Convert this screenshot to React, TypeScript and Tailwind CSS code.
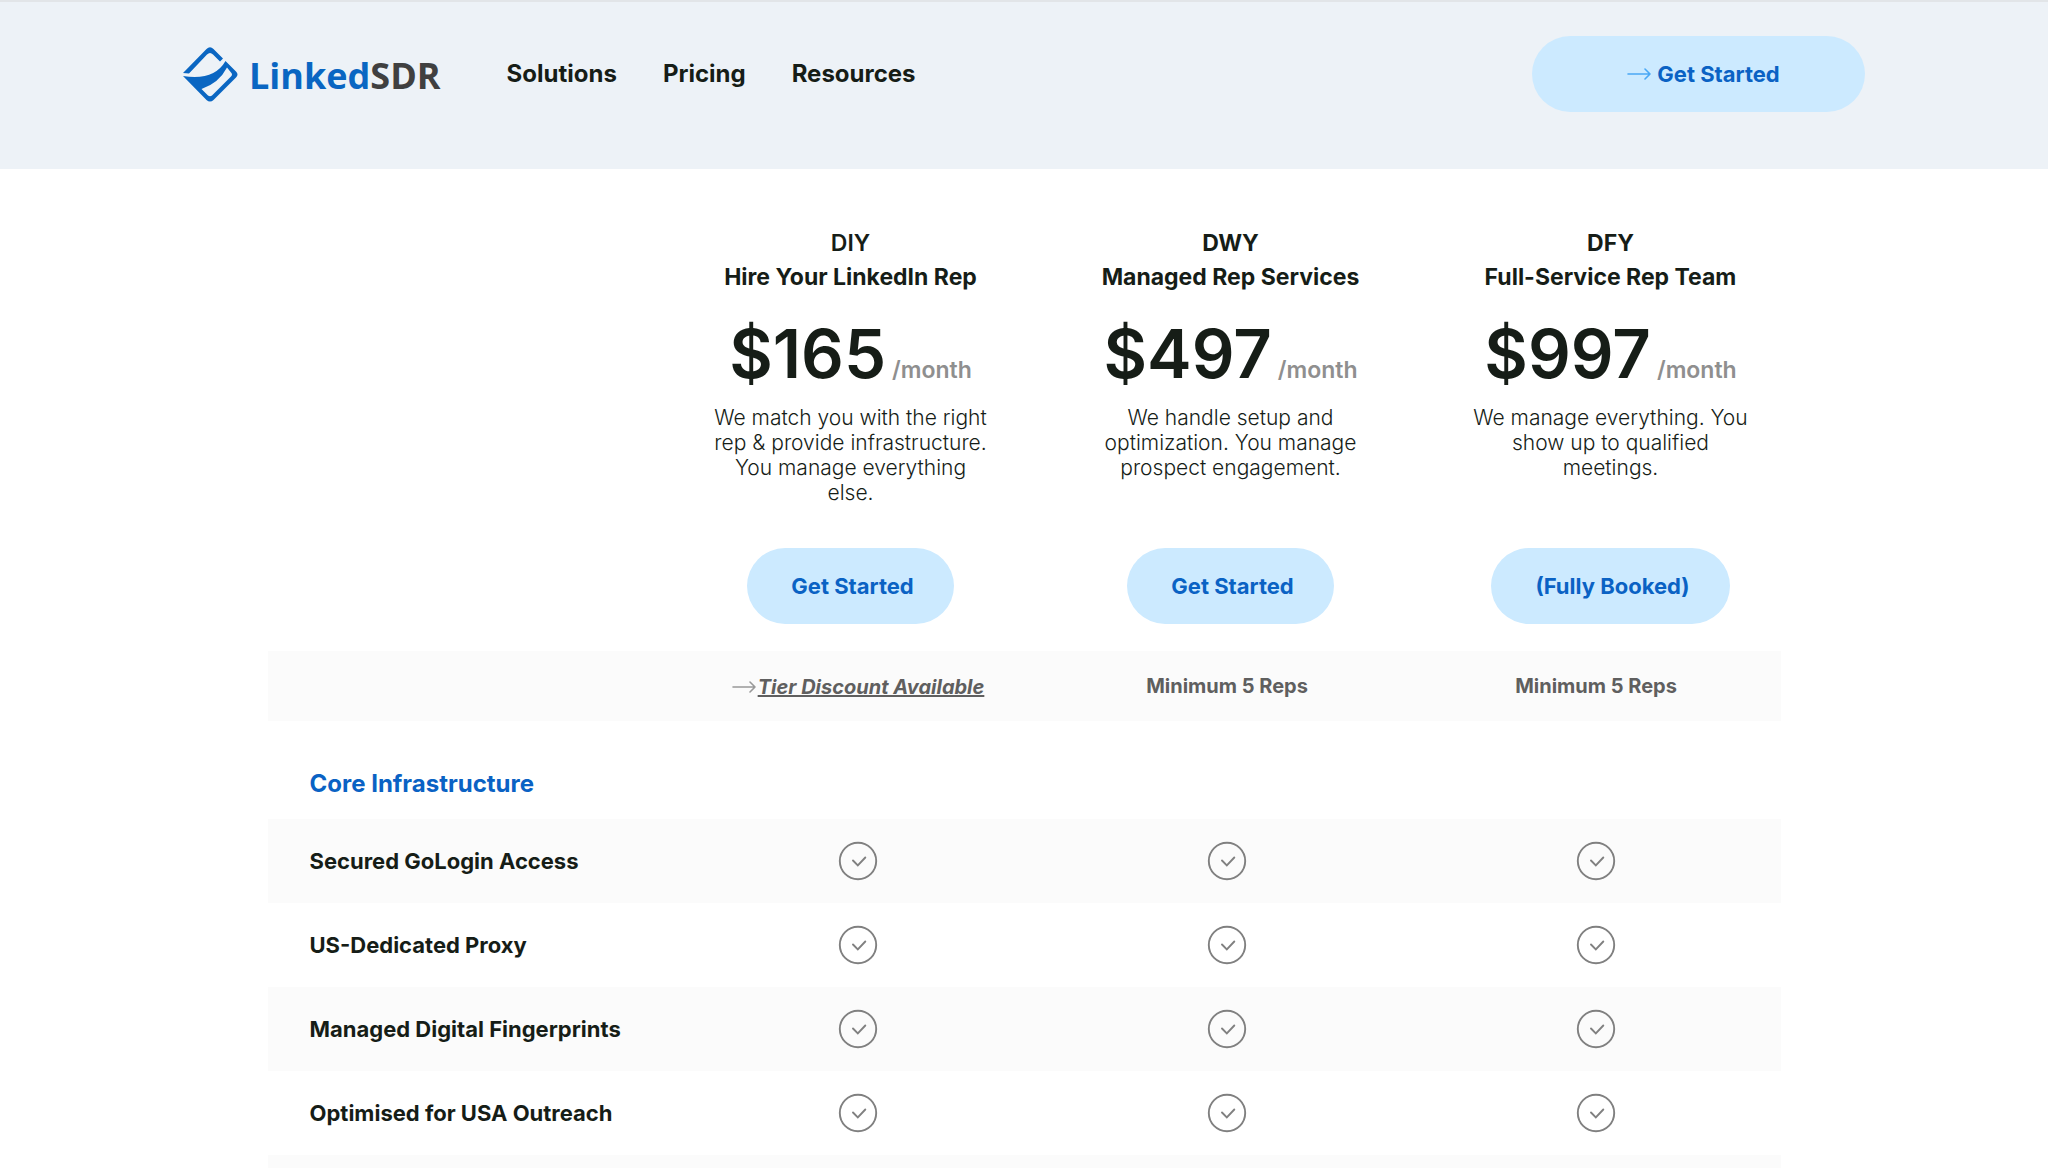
import React from 'react';

const navLinks = ['Solutions', 'Pricing', 'Resources'];

const plans = [
  {
    code: 'DIY',
    codeClass: 'font-semibold',
    name: 'Hire Your LinkedIn Rep',
    price: '$165',
    description: 'We match you with the right rep & provide infrastructure. You manage everything else.',
    cta: 'Get Started',
  },
  {
    code: 'DWY',
    codeClass: 'font-bold',
    name: 'Managed Rep Services',
    price: '$497',
    description: 'We handle setup and optimization. You manage prospect engagement.',
    cta: 'Get Started',
  },
  {
    code: 'DFY',
    codeClass: 'font-bold',
    name: 'Full-Service Rep Team',
    price: '$997',
    description: 'We manage everything. You show up to qualified meetings.',
    cta: '(Fully Booked)',
  },
];

const features = [
  'Secured GoLogin Access',
  'US-Dedicated Proxy',
  'Managed Digital Fingerprints',
  'Optimised for USA Outreach',
];

const Arrow = ({ className }: { className: string }) => (
  <svg className={className} width="24" height="12" viewBox="0 0 24 12" fill="none" stroke="currentColor" strokeWidth="1.6" strokeLinecap="round" strokeLinejoin="round" aria-hidden="true">
    <path d="M1 6H23M18 1l5 5-5 5" />
  </svg>
);

const CheckCircle = () => (
  <svg className="mx-auto text-[#808080]" width="40" height="40" viewBox="0 0 40 40" fill="none" stroke="currentColor" strokeWidth="1.9" role="img" aria-label="Included">
    <circle cx="20" cy="20" r="18.200" />
    <path d="M15 19.500l4.800 4.800 7.500-7.800" strokeLinecap="round" />
  </svg>
);

const Logo = () => (
  <a href="#" className="flex items-center gap-[11px]">
    <svg width="55" height="55" viewBox="0 0 55 55" fill="#0a66c2" aria-hidden="true">
      <path d="M0 26L23.500 2Q27 -1.500 30.500 2L40 11.500L37 14.500L30 7.500Q27 4.500 24 7.500L6 26.500Z" />
      <path fillRule="evenodd" d="M0 29Q31 34 42.500 14L53 24.500Q56 27.500 53 30.500L30.500 53Q27 56 23.500 53ZM44 20.500Q36 36 18.500 42L25 48.500Q27 50 29 48.500L48 29.500Q50 27.500 48 25.500Z" />
    </svg>
    <span className="pt-1 font-['Open_Sans',sans-serif] text-[36px] leading-[40px] font-bold text-[#0a66c2]">
      Linked<span className="text-[#404040]">SDR</span>
    </span>
  </a>
);

const App = () => {
  return (
    <div className="h-screen overflow-hidden bg-white font-['Inter',sans-serif] text-[#161d17]">
      {/* Header */}
      <header className="border-t-2 border-[#e2e5e8] bg-[#edf2f7] px-6 pt-[34px] pb-[57px]">
        <div className="mx-auto flex max-w-[1682px] items-center justify-between">
          <div className="flex items-center gap-[66px]">
            <Logo />
            <nav className="flex gap-[46px] text-[24px] leading-[30px] font-bold">
              {navLinks.map((link) => (
                <a key={link} href="#">{link}</a>
              ))}
            </nav>
          </div>
          <button className="flex h-[76px] w-[333px] items-center justify-center gap-[6px] rounded-full bg-[#cceaff] pl-[10px] text-[22px] font-bold text-[#0a62c4]">
            <Arrow className="text-[#4aa8f5]" />
            Get Started
          </button>
        </div>
      </header>

      <main className="mx-auto max-w-[1513px]">
        {/* Plans */}
        <section className="flex justify-end gap-[100px] pt-[57px] pr-[30px] pb-[27px] text-center">
          {plans.map((plan) => (
            <div key={plan.code} className="flex w-[280px] flex-col items-center">
              <h2 className="text-[23px] leading-[34px] whitespace-nowrap">
                <span className={plan.codeClass}>{plan.code}</span>
                <br />
                <span className="font-bold">{plan.name}</span>
              </h2>
              <p className="mt-[20px] flex items-baseline gap-[6px]">
                <span className="text-[67px] leading-[80px] font-semibold">{plan.price}</span>
                <span className="text-[23px] leading-[30px] font-semibold text-[#8f8f8f]">/month</span>
              </p>
              <p className="mt-[11px] mb-[43px] text-[21px] leading-[25px] font-light">{plan.description}</p>
              <button className="mt-auto h-[76px] rounded-full bg-[#cceaff] pr-[40px] pl-[44px] text-[22px] font-bold text-[#0a62c4]">
                {plan.cta}
              </button>
            </div>
          ))}
        </section>

        {/* Comparison table */}
        <table className="w-full table-fixed border-collapse">
          <colgroup>
            <col />
            <col className="w-[369px]" />
            <col className="w-[369px]" />
            <col className="w-[369px]" />
          </colgroup>
          <tbody>
            <tr className="h-[70px] bg-[#fbfbfb] text-center text-[20px] font-bold text-[#5f5f5f]">
              <td />
              <td>
                <a href="#" className="inline-flex items-center gap-[2px]">
                  <Arrow className="text-[#999999]" />
                  <span className="italic underline">Tier Discount Available</span>
                </a>
              </td>
              <td>Minimum 5 Reps</td>
              <td>Minimum 5 Reps</td>
            </tr>
            <tr className="h-[98px]">
              <th colSpan={4} scope="colgroup" className="px-[42px] pt-[28px] text-left text-[24px] leading-[30px] font-bold text-[#0a62c4]">
                Core Infrastructure
              </th>
            </tr>
            {features.map((feature) => (
              <tr key={feature} className="h-[84px] odd:bg-[#fbfbfb]">
                <th scope="row" className="pl-[42px] text-left text-[22px] font-bold whitespace-nowrap">{feature}</th>
                {plans.map((plan) => (
                  <td key={plan.code}>
                    <CheckCircle />
                  </td>
                ))}
              </tr>
            ))}
            <tr className="h-[84px] bg-[#fbfbfb]">
              <td colSpan={4} />
            </tr>
          </tbody>
        </table>
      </main>
    </div>
  );
};

export default App;
